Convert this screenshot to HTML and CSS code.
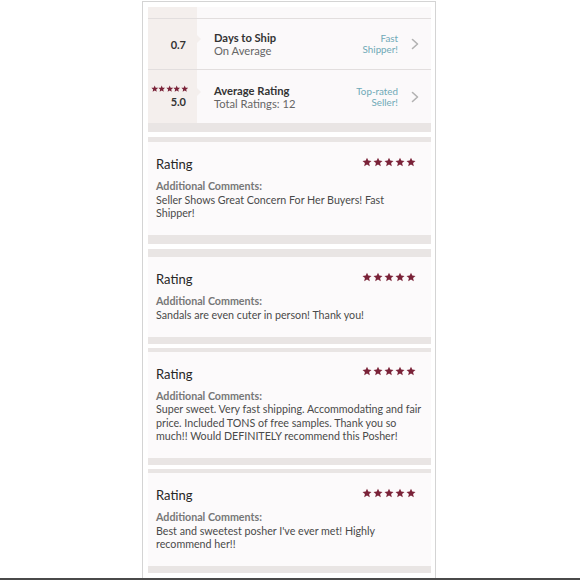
FILE: index.html
```html
<!DOCTYPE html>
<html>
<head>
<meta charset="utf-8">
<link rel="stylesheet" href="styles.css">
</head>
<body>
<svg class="defs" width="0" height="0" aria-hidden="true">
  <symbol id="star" viewBox="0 0 24 24"><path d="M12 1.5l3.1 7.1 7.7.7-5.8 5.1 1.7 7.6L12 18l-6.7 4 1.7-7.6-5.8-5.1 7.7-.7z"/></symbol>
  <symbol id="chev" viewBox="0 0 8 12"><path d="M1.5 1.5l5 4.5-5 4.5" fill="none" stroke="currentColor" stroke-width="1.6" stroke-linecap="round" stroke-linejoin="round"/></symbol>
</svg>
<div class="page">
  <div class="frame">
    <div class="stats">
      <div class="stat-strip"><div class="key-fill"></div><div class="body-fill"></div></div>
      <div class="stat-row">
        <div class="stat-key"><span class="key-num">0.7</span></div>
        <div class="stat-body">
          <div class="stat-text">
            <div class="stat-title">Days to Ship</div>
            <div class="stat-sub">On Average</div>
          </div>
          <div class="badge">Fast<br>Shipper!</div>
          <svg class="chev"><use href="#chev"/></svg>
        </div>
      </div>
      <div class="stat-row row-tall">
        <div class="stat-key">
          <span class="mini-stars">
            <svg><use href="#star"/></svg><svg><use href="#star"/></svg><svg><use href="#star"/></svg><svg><use href="#star"/></svg><svg><use href="#star"/></svg>
          </span>
          <span class="key-num">5.0</span>
        </div>
        <div class="stat-body">
          <div class="stat-text">
            <div class="stat-title">Average Rating</div>
            <div class="stat-sub">Total Ratings: 12</div>
          </div>
          <div class="badge">Top-rated<br>Seller!</div>
          <svg class="chev"><use href="#chev"/></svg>
        </div>
      </div>
    </div>

    <div class="sep sep-a"><div class="band b1"></div><div class="gap"></div><div class="band b2"></div></div>

    <div class="card">
      <div class="card-head"><span class="card-title">Rating</span><span class="stars"><svg><use href="#star"/></svg><svg><use href="#star"/></svg><svg><use href="#star"/></svg><svg><use href="#star"/></svg><svg><use href="#star"/></svg></span></div>
      <div class="label">Additional Comments:</div>
      <div class="comment">Seller Shows Great Concern For Her Buyers! Fast Shipper!</div>
    </div>

    <div class="sep sep-b"><div class="band b1"></div><div class="gap"></div><div class="band b2"></div></div>

    <div class="card">
      <div class="card-head"><span class="card-title">Rating</span><span class="stars"><svg><use href="#star"/></svg><svg><use href="#star"/></svg><svg><use href="#star"/></svg><svg><use href="#star"/></svg><svg><use href="#star"/></svg></span></div>
      <div class="label">Additional Comments:</div>
      <div class="comment">Sandals are even cuter in person! Thank you!</div>
    </div>

    <div class="sep sep-c"><div class="band b1"></div><div class="gap"></div><div class="band b2"></div></div>

    <div class="card">
      <div class="card-head"><span class="card-title">Rating</span><span class="stars"><svg><use href="#star"/></svg><svg><use href="#star"/></svg><svg><use href="#star"/></svg><svg><use href="#star"/></svg><svg><use href="#star"/></svg></span></div>
      <div class="label">Additional Comments:</div>
      <div class="comment">Super sweet. Very fast shipping. Accommodating and fair price. Included TONS of free samples. Thank you so much!! Would DEFINITELY recommend this Posher!</div>
    </div>

    <div class="sep sep-c"><div class="band b1"></div><div class="gap"></div><div class="band b2"></div></div>

    <div class="card">
      <div class="card-head"><span class="card-title">Rating</span><span class="stars"><svg><use href="#star"/></svg><svg><use href="#star"/></svg><svg><use href="#star"/></svg><svg><use href="#star"/></svg><svg><use href="#star"/></svg></span></div>
      <div class="label">Additional Comments:</div>
      <div class="comment">Best and sweetest posher I've ever met! Highly recommend her!!</div>
    </div>

    <div class="band end-band"></div>
  </div>
  <div class="bottom-line"></div>
</div>
</body>
</html>
```
FILE: styles.css
```css
* { box-sizing: border-box; }
html, body { margin: 0; padding: 0; background: #ffffff; }
body { font-family: "Lato", "Liberation Sans", sans-serif; color: #333; }
.defs { position: absolute; width: 0; height: 0; overflow: hidden; }

.page { height: 580px; display: flex; flex-direction: column; }
.frame {
  flex: 1;
  margin: 1px 0 0 142px;
  width: 294px;
  border: 1px solid #d4d4d4;
  border-bottom: none;
  padding: 5px 4px 0 5px;
  background: #fff;
  overflow: hidden;
}
.bottom-line { height: 2px; background: #4a4a4a; }

/* stats */
.stats { background: #fbf9fa; }
.stat-strip { display: flex; height: 11px; }
.key-fill { width: 49px; background: #f4efed; }
.body-fill { flex: 1; }
.stat-row { display: flex; height: 51px; border-top: 1px solid #e2dede; }
.stat-row.row-tall { height: 54px; }
.stat-key {
  width: 49px; background: #f4efed;
  display: flex; flex-direction: column; justify-content: center; align-items: flex-end;
  padding-right: 11px; position: relative;
}
.stat-key::after {
  content: ""; position: absolute; right: -4px; top: 50%; margin-top: -9px;
  border-left: 4px solid #f4efed; border-top: 4px solid transparent; border-bottom: 4px solid transparent;
}
.key-num { font-size: 11px; font-weight: 700; color: #333; line-height: 13px; }
.mini-stars { display: flex; gap: 0; margin-right: -2px; margin-bottom: 3px; }
.mini-stars svg { width: 7.4px; height: 7.4px; fill: #7a2238; }

.stat-body { flex: 1; display: flex; align-items: center; padding: 0 12px 0 17px; }
.stat-text { flex: 1; }
.stat-title { font-size: 11.2px; font-weight: 700; line-height: 13px; color: #333; }
.stat-sub { font-size: 11.2px; line-height: 13px; color: #666; }
.badge { font-size: 9.8px; line-height: 11px; color: #6fa9b7; text-align: right; }
.chev { width: 8px; height: 12px; margin-left: 13px; color: #b2b2b2; }

/* separators */
.band { background: #e9e5e4; }
.gap { background: #ffffff; }
.sep-a .b1 { height: 9px; } .sep-a .gap { height: 5px; } .sep-a .b2 { height: 5px; }
.sep-b .b1 { height: 9px; } .sep-b .gap { height: 5px; } .sep-b .b2 { height: 8px; }
.sep-c .b1 { height: 7px; } .sep-c .gap { height: 4px; } .sep-c .b2 { height: 4px; }
.end-band { height: 7px; }

/* cards */
.card { background: #fcfafb; padding: 14px 8px 15.5px 8px; }
.card-head { display: flex; justify-content: space-between; align-items: center; height: 16px; }
.card-title { font-size: 13px; color: #262626; line-height: 16px; }
.stars { display: flex; gap: 1px; margin-top: -5px; margin-right: 7px; }
.stars svg { width: 10px; height: 10px; fill: #7a2238; }
.label { margin-top: 7px; font-size: 10.7px; font-weight: 700; color: #777; line-height: 13.5px; }
.comment { font-size: 10.7px; color: #4a4a4a; line-height: 13.5px; }
```
